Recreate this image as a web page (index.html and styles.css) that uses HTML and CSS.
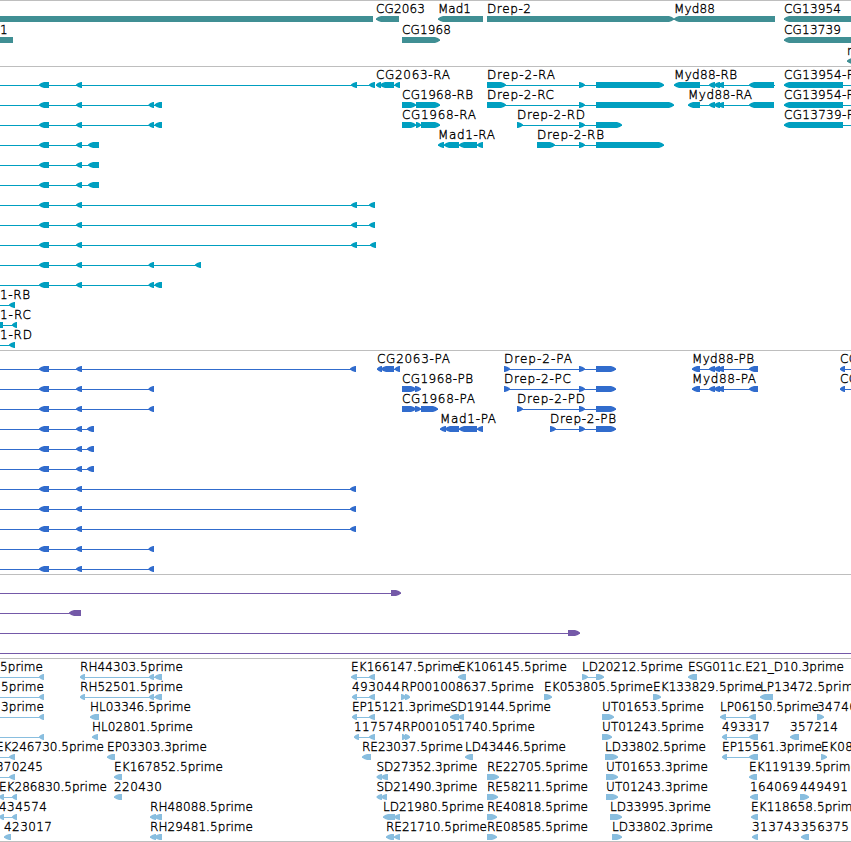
FILE: index.html
```html
<!DOCTYPE html>
<html lang="en">
<head>
<meta charset="utf-8">
<title>Genome region</title>
<link rel="stylesheet" href="styles.css">
</head>
<body>

<div class="browser">
  <div class="track genes"><svg id="genes"></svg></div>
  <div class="track transcripts"><svg id="transcripts"></svg></div>
  <div class="track proteins"><svg id="proteins"></svg></div>
  <div class="track insertions"><svg id="insertions"></svg></div>
  <div class="track ests"><svg id="ests"></svg></div>
</div>

<script src="tracks.js"></script>
</body>
</html>
```

FILE: styles.css
```css
body {
  margin: 0;
  background: #fff;
}
.browser {
  display: flex;
  flex-direction: column;
  overflow: hidden;
  border-bottom: 1px solid #bebebe;
}
.track {
  box-sizing: border-box;
  border-top: 1px solid #bebebe;
}
.track svg {
  display: block;
  width: 100%;
  height: 100%;
  overflow: hidden;
}
.track text {
  font-family: "DejaVu Sans Light", "DejaVu Sans", Verdana, sans-serif;
  font-weight: 200;
  font-size: 12px;
  fill: #000;
  stroke: #000;
  stroke-width: .35px;
  white-space: pre;
}
.track rect {
  shape-rendering: crispEdges;
}
.genes {
  height: 66px;
  fill: #408f94;
}
.transcripts {
  height: 284px;
  fill: #009fc0;
}
.proteins {
  height: 224px;
  fill: #316ccd;
}
.insertions {
  height: 84px;
  fill: #7459a8;
}
.ests {
  height: 183px;
  fill: #89bedf;
}
```

FILE: tracks.js
```js
// feature: [row, direction, exons, label, label width, line start, line end]
// the label starts where the feature starts

const L = 'L', R = 'R', N = '';
const OFF = -10, END = 860;

const genes = [
  [0, N, [[OFF, 373]]],
  [0, L, [[376, 399]], 'CG2063', 49],
  [0, L, [[438, 483]], 'Mad1', 33],
  [0, R, [[487, 674]], 'Drep-2', 44],
  [0, L, [[674, 775]], 'Myd88', 41],
  [0, L, [[784, END]], 'CG13954', 57],
  [1, N, [[0, 13]], '1', 8],
  [1, R, [[402, 440]], 'CG1968', 49],
  [1, L, [[784, END]], 'CG13739', 57],
  [2, L, [[847, END]], 'r', 5]
];

const transcripts = [
  [0, L, [[376, 381], [380, 394], [394.5, 400]], 'CG2063-RA', 74],
  [1, R, [[402, 405], [403, 416], [416, 440]], 'CG1968-RB', 71],
  [2, R, [[402, 405], [403, 416], [416, 421], [421, 440]], 'CG1968-RA', 74],
  [3, L, [[438, 444], [444, 459], [459, 477], [477, 483]], 'Mad1-RA', 57],
  [0, R, [[487, 506], [579, 585], [596, 664]], 'Drep-2-RA', 68],
  [1, R, [[487, 506], [579, 585], [596, 674]], 'Drep-2-RC', 67],
  [2, R, [[517, 523], [579, 585], [596, 622]], 'Drep-2-RD', 68],
  [3, R, [[537, 555], [579, 585], [596, 664]], 'Drep-2-RB', 67],
  [0, L, [[674, 700], [709, 715], [714, 720], [718, 724], [749, 774]], 'Myd88-RB', 63, 674, 775],
  [1, L, [[688, 700], [709, 715], [714, 720], [718, 724], [749, 774]], 'Myd88-RA', 64],
  [0, L, [[784, 843]], 'CG13954-RA', 79, 784, END],
  [1, L, [[784, 843]], 'CG13954-RB', 79, 784, END],
  [2, L, [[784, 843]], 'CG13739-RA', 79, 784, END],
  [11, L, [[0, 0], [9, 15]], '1-RB', 30],
  [12, N, [[0, 3]], '1-RC', 31],
  [12, L, [[12, 17]], '', 0, 3, 17],
  [13, L, [[0, 0], [9, 15]], '1-RD', 32]
];

const proteins = [
  [0, L, [[377, 382], [381, 394], [394.5, 400]], 'CG2063-PA', 73],
  [1, R, [[402, 405], [403, 416], [415, 421]], 'CG1968-PB', 71],
  [2, R, [[402, 405], [403, 416], [415, 421], [421, 438]], 'CG1968-PA', 73],
  [3, L, [[440, 446], [445, 459], [459, 477], [477, 483]], 'Mad1-PA', 56],
  [0, R, [[504, 510], [579, 585], [596, 616]], 'Drep-2-PA', 68],
  [1, R, [[504, 510], [579, 585], [596, 616]], 'Drep-2-PC', 67],
  [2, R, [[517, 523], [579, 585], [596, 616]], 'Drep-2-PD', 68],
  [3, R, [[550, 556], [579, 585], [596, 616]], 'Drep-2-PB', 66],
  [0, L, [[692, 700], [709, 715], [714, 720], [718, 724], [749, 758]], 'Myd88-PB', 62],
  [1, L, [[692, 700], [709, 715], [714, 720], [718, 724], [749, 758]], 'Myd88-PA', 64],
  [0, L, [[840, 845]], 'CG13954-PA', 79, 840, END],
  [1, L, [[840, 845]], 'CG13954-PB', 79, 840, END]
];

const insertions = [
  [0, R, [[391, 401]], '', 0, OFF, 401],
  [1, L, [[69, 81]], '', 0, OFF, 81],
  [2, R, [[568, 580]], '', 0, OFF, 580],
  [3, N, [], '', 0, OFF, END]
];

const ests = [
  [0, L, [[0, 0], [39, 44]], '5prime', 43],
  [1, L, [[1, 1], [39, 44]], '5prime', 43, OFF, 44],
  [2, L, [[1, 1], [39, 44]], '3prime', 43, OFF, 44],
  [3, L, [[39, 44]], '', 0, OFF, 44],
  [4, L, [[-4, -4], [9, 15]], 'EK246730.5prime', 108],
  [5, L, [[-4, -4], [9, 15]], '370245', 47],
  [6, L, [[-1, 4], [12, 17]], 'EK286830.5prime', 108],
  [7, L, [[-1, 4], [12, 17]], '434574', 48],
  [8, L, [[4, 11]], '423017', 48],
  [0, L, [[80, 85], [149, 154], [154.5, 162]], 'RH44303.5prime', 103],
  [1, L, [[80, 85], [149, 154], [154.5, 162]], 'RH52501.5prime', 103],
  [2, L, [[90, 99]], 'HL03346.5prime', 101],
  [3, L, [[92, 98]], 'HL02801.5prime', 101],
  [4, L, [[107, 115]], 'EP03303.3prime', 100],
  [5, L, [[114, 122]], 'EK167852.5prime', 109],
  [6, L, [[114, 122]], '220430', 48],
  [7, L, [[150, 156], [154.5, 162]], 'RH48088.5prime', 103],
  [8, L, [[150, 156], [154.5, 162]], 'RH29481.5prime', 103],

  [0, L, [[351, 357], [369, 375]], 'EK166147.5prime', 109],
  [1, L, [[352, 357], [369, 375]], '493044', 48],
  [2, L, [[352, 357], [369, 375]], 'EP15121.3prime', 99],
  [3, L, [[354, 359], [369, 375]], '117574', 48],
  [4, L, [[362, 371]], 'RE23037.5prime', 101],
  [5, L, [[376.5, 382], [381, 388]], 'SD27352.3prime', 101],
  [6, L, [[376.5, 382], [381, 387]], 'SD21490.3prime', 101],
  [7, L, [[383, 395], [394, 400]], 'LD21980.5prime', 101],
  [8, L, [[386, 394], [394, 400]], 'RE21710.5prime', 101],
  [0, L, [[458, 466]], 'EK106145.5prime', 109],
  [1, R, [[401, 406], [405, 410]], 'RP001008637.5prime', 133],
  [2, L, [[450, 459], [458, 464]], 'SD19144.5prime', 101],
  [3, R, [[402, 406], [405, 410]], 'RP001051740.5prime', 133],
  [4, L, [[465, 473]], 'LD43446.5prime', 101],
  [5, R, [[487, 499]], 'RE22705.5prime', 101],
  [6, R, [[487, 498]], 'RE58211.5prime', 101],
  [7, R, [[487, 497]], 'RE40818.5prime', 101],
  [8, R, [[487, 497]], 'RE08585.5prime', 101],

  [0, R, [[582, 588], [596, 604]], 'LD20212.5prime', 101],
  [1, R, [[544, 552]], 'EK053805.5prime', 109],
  [2, R, [[602, 614]], 'UT01653.5prime', 102],
  [3, R, [[602, 612]], 'UT01243.5prime', 102],
  [4, R, [[605, 618]], 'LD33802.5prime', 101],
  [5, R, [[606, 618]], 'UT01653.3prime', 102],
  [6, R, [[606, 618]], 'UT01243.3prime', 102],
  [7, R, [[610, 622]], 'LD33995.3prime', 101],
  [8, R, [[612, 622]], 'LD33802.3prime', 101],
  [0, L, [[688, 697]], 'ESG011c.E21_D10.3prime', 156],
  [1, R, [[653, 661]], 'EK133829.5prime', 109],
  [1, L, [[760, 773]], 'LP13472.5prime', 101],
  [2, L, [[720, 726], [749, 756]], 'LP06150.5prime', 99],
  [3, L, [[722, 727], [749, 758]], '493317', 48],
  [4, L, [[722, 727], [749, 758]], 'EP15561.3prime', 100],
  [5, L, [[749, 757]], 'EK119139.5prime', 109],
  [6, L, [[750, 758]], '164069', 48],
  [7, L, [[751, 758]], 'EK118658.5prime', 109],
  [8, L, [[752, 758]], '313743', 48],
  [2, R, [[817, 824]], '347463', 48],
  [3, L, [[790, 799]], '357214', 48],
  [4, R, [[821, 827]], 'EK083', 40],
  [6, R, [[800, 809]], '449491', 48],
  [8, L, [[801, 809]], '356375', 48]
];

// long gene coming in from the left: same two exons, then a different 5' end
const addIsoforms = (track, tails) => {
  tails.forEach((tail, row) => {
    track.push([row, L, [[39, 49], [76, 82]].concat(tail), '', 0, OFF, tail[tail.length - 1][1]]);
  });
};

const far = [[351, 357], [369, 375]];
const mid = [[148.5, 154], [154.5, 162]];
const near = [[88, 99]];
addIsoforms(transcripts, [far, mid, mid, near, near, near, far, far,
  [[351, 357], [370, 376]], [[148.5, 154], [195, 201]], mid]);

const pFar = [[350, 356]];
const pMid = [[148.5, 154]];
const pNear = [[87, 94]];
addIsoforms(proteins, [pFar, pMid, pMid, pNear, pNear, pNear, pFar, pFar, pFar, pMid, pMid]);

// box with a rounded head on the side it points to
const exonShape = (x1, x2, y, direction) => {
  const w = x2 - x1;
  if (w <= 0) return '';
  if (direction === N) return `<rect x="${x1}" y="${y}" width="${w}" height="6"/>`;
  const tip = direction === L ? x1 : x2;
  const back = direction === L ? x2 : x1;
  const s = direction === L ? 1 : -1;
  const head = Math.min(w - 1, 5) * s;
  const c = tip + head * .35;
  return `<path d="M${tip},${y + 2.4} Q${c},${y + .8} ${tip + head},${y} H${back} V${y + 6} H${tip + head} Q${c},${y + 5} ${tip},${y + 3.4} Z"/>`;
};

const drawTrack = (id, features, pitch) => {
  let shapes = '', labels = '';
  features.forEach(([row, direction, exons, label, width, from, to]) => {
    const y = 15 + row * pitch;
    const start = exons.length ? exons[0][0] : from;
    if (from === undefined) {
      from = start;
      to = exons[exons.length - 1][1];
    }
    shapes += `<rect x="${from}" y="${y + 3}" width="${to - from}" height="1"/>`;
    exons.forEach(([x1, x2]) => shapes += exonShape(x1, x2, y, direction));
    if (label) {
      labels += `<text x="${start}" y="${y - 3}" textLength="${width}">${label}</text>`;
    }
  });
  document.getElementById(id).innerHTML = shapes + labels;
};

drawTrack('genes', genes, 21);
drawTrack('transcripts', transcripts, 20);
drawTrack('proteins', proteins, 20);
drawTrack('insertions', insertions, 20);
drawTrack('ests', ests, 20);
```
